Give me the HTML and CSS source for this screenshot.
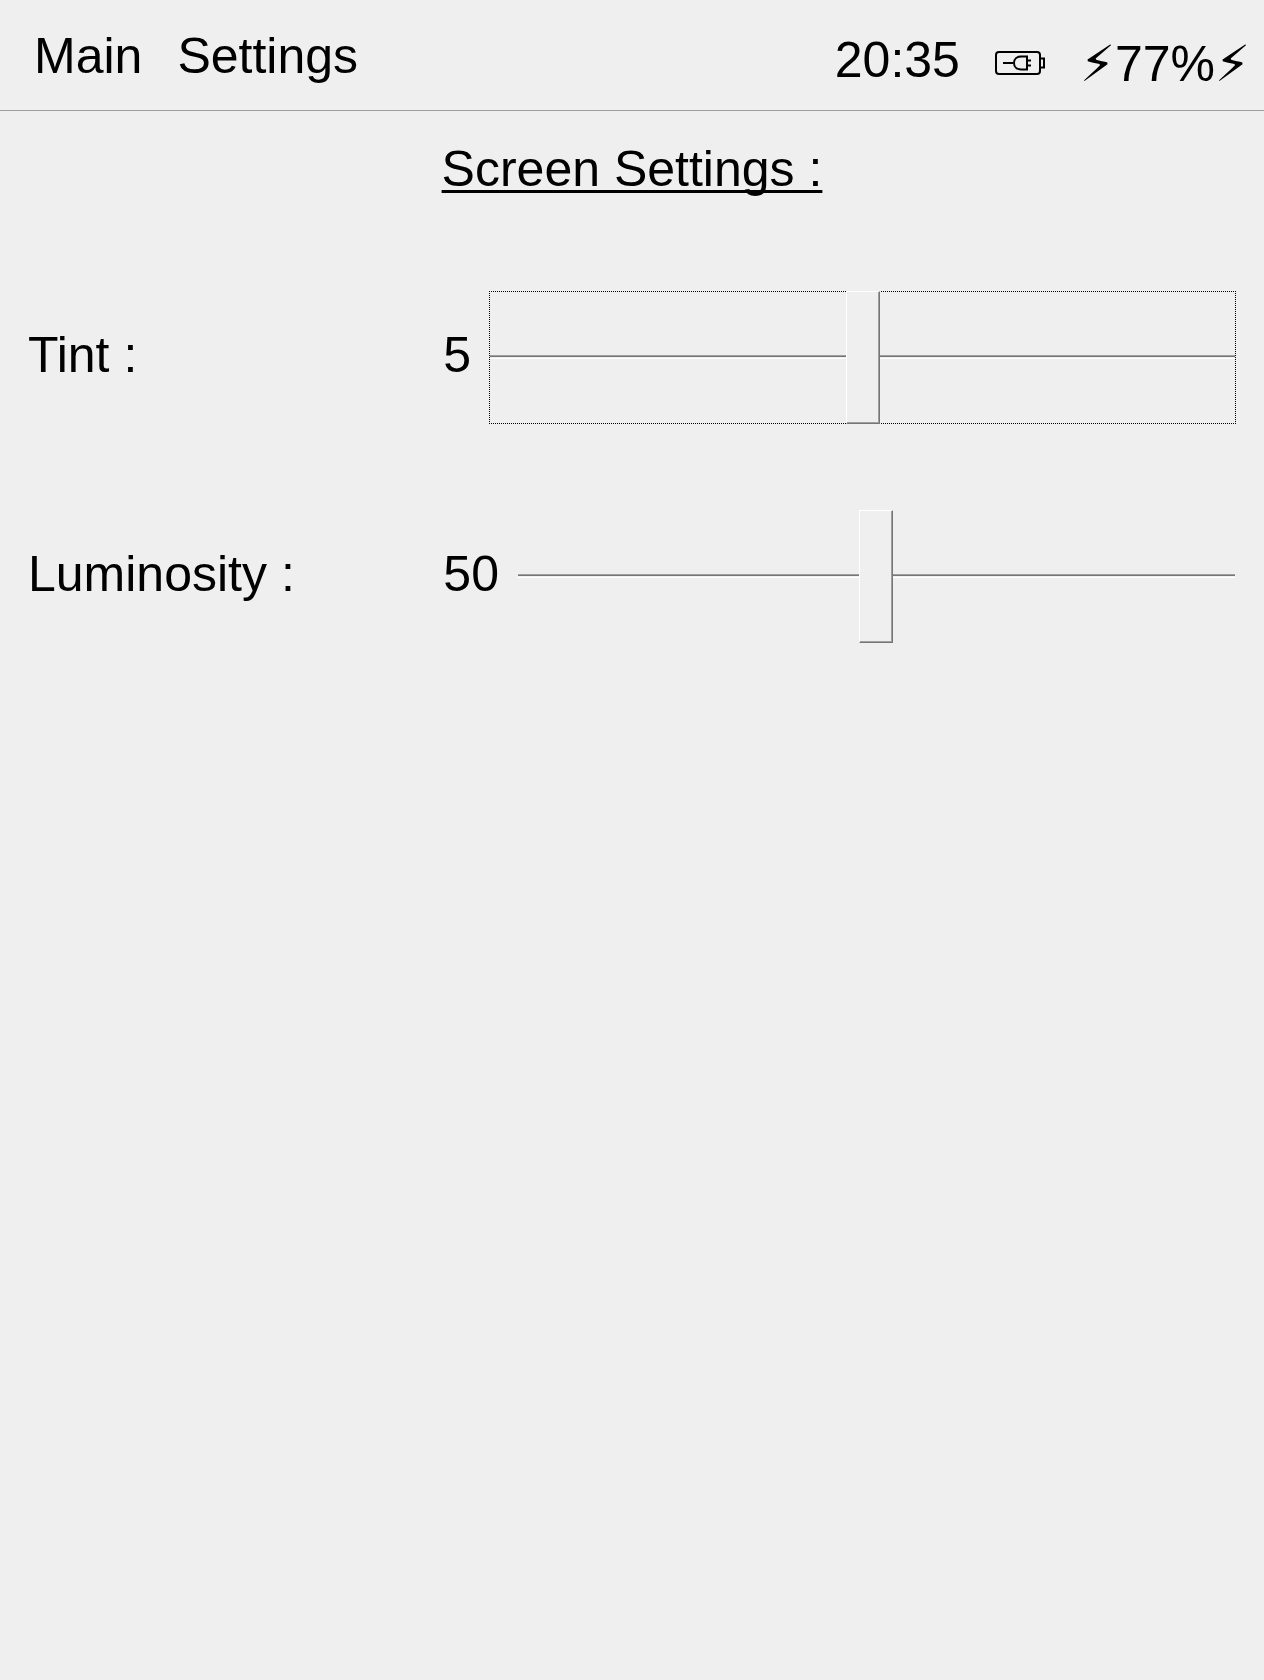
FILE: index.html
```html
<!DOCTYPE html>
<html lang="en">
<head>
<meta charset="utf-8">
<meta name="viewport" content="width=device-width, initial-scale=1">
<title>Screen Settings</title>
<link rel="stylesheet" href="styles.css">
</head>
<body>
<header class="topbar">
  <nav class="menu">
    <button type="button" class="menu-item">Main</button>
    <button type="button" class="menu-item">Settings</button>
  </nav>
  <div class="status">
    <time class="clock">20:35</time>
    <svg class="battery-icon" viewBox="0 0 50 24" role="img" aria-label="Battery charging">
      <rect x="1" y="1" width="44" height="22" rx="3"/>
      <path d="M45 7.500h4v9h-4M8 12h10M32 5.500v13h-6c-4 0-7-2.500-7-6.500s3-6.500 7-6.500zM32 9.500h4M32 14.500h4"/>
    </svg>
    <span class="charge"><span class="bolt">⚡</span>77%<span class="bolt">⚡</span></span>
  </div>
</header>
<main class="page">
  <h1 class="title">Screen Settings :</h1>
  <form class="settings">
    <div class="row">
      <label class="text" for="tint">Tint :</label>
      <div class="control">
        <output class="text" for="tint">5</output>
        <div class="slider-frame is-active"><input class="slider" id="tint" type="range" min="0" max="10" value="5"></div>
      </div>
    </div>
    <div class="row">
      <label class="text" for="luminosity">Luminosity :</label>
      <div class="control">
        <output class="text" for="luminosity">50</output>
        <div class="slider-frame"><input class="slider" id="luminosity" type="range" min="0" max="100" value="50"></div>
      </div>
    </div>
  </form>
</main>
</body>
</html>
```
FILE: styles.css
```css
* {
  box-sizing: border-box;
}

body {
  margin: 0;
  background: #efefef;
  color: #000;
  font-family: "Liberation Sans", Arial, sans-serif;
  font-size: 50px;
  line-height: 58px;
}

.topbar {
  display: flex;
  justify-content: space-between;
  align-items: flex-start;
  min-height: 111px;
  padding: 27px 14px 0 34px;
  border-bottom: 1px solid #9f9f9f;
}

.menu,
.status {
  display: flex;
  align-items: flex-start;
  gap: 35px;
}

.menu-item {
  padding: 0;
  border: 0;
  background: none;
  color: inherit;
  font: inherit;
}

.clock {
  padding-top: 4px;
}

.battery-icon {
  width: 50px;
  height: 24px;
  margin-top: 24px;
  fill: none;
  stroke: #000;
  stroke-width: 2;
}

.charge {
  display: flex;
  padding-top: 8px;
}

.bolt {
  width: 35px;
  font-family: "DejaVu Sans", sans-serif;
  text-align: center;
}

.page {
  padding: 29px 28px;
}

.title {
  margin: 0 0 93px;
  font-size: 50px;
  font-weight: 400;
  text-align: center;
  text-decoration: underline 3px;
  text-decoration-skip-ink: none;
  text-underline-offset: 4px;
}

.settings {
  display: grid;
  gap: 86px;
}

.row {
  display: grid;
  grid-template-columns: 1fr 2fr;
  gap: 19px;
  align-items: center;
}

.text {
  padding-bottom: 6px;
}

.control {
  display: flex;
  align-items: center;
  gap: 18px;
}

.slider-frame {
  display: flex;
  flex: 1;
  height: 133px;
  border: 1px dotted transparent;
}

.slider-frame.is-active {
  border-color: #000;
}

.slider {
  appearance: none;
  flex: 1;
  min-width: 0;
  height: 133px;
  margin: -1px 0;
  background: none;
  outline: none;
}

.slider::-webkit-slider-runnable-track {
  height: 5px;
  background: linear-gradient(#9f9f9f 1px, #767676 1px 2px, #efefef 2px 3px, #fff 3px 4px, transparent 4px);
}

.slider::-webkit-slider-thumb {
  appearance: none;
  width: 34px;
  height: 133px;
  margin-top: -64px;
  border: 1px solid;
  border-color: #fff #767676 #767676 #fff;
  border-radius: 0;
  background: #efefef;
  box-shadow: inset -1px -1px #9f9f9f;
}
```
